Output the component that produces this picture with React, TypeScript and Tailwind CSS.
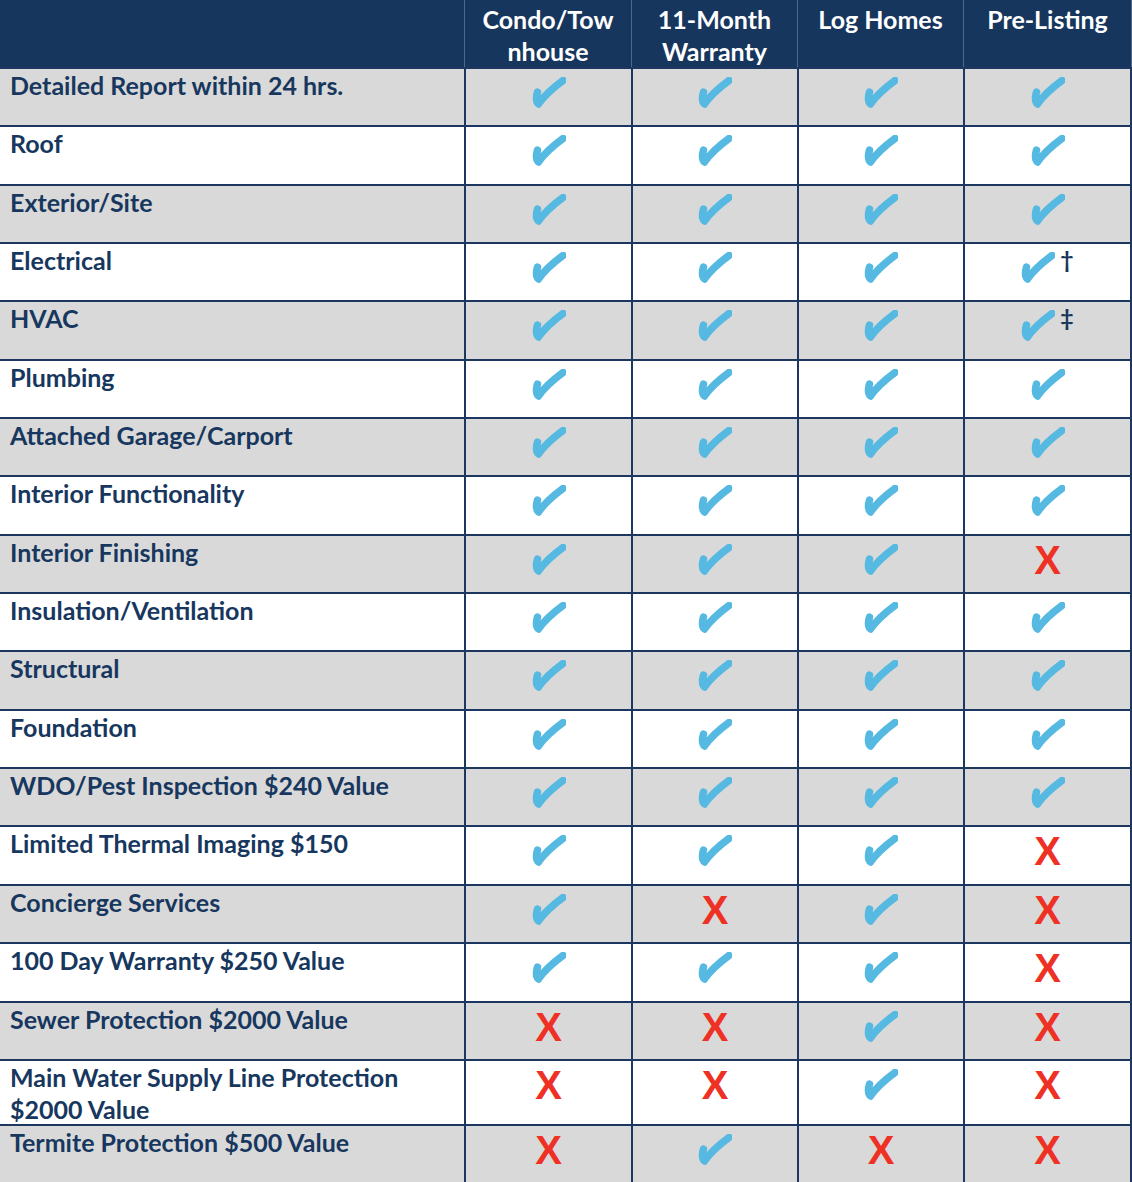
import React from "react";

type Mark = "c" | "x" | "c1" | "c2";

const rows: { label: React.ReactNode; marks: Mark[]; h?: string }[] = [
  { label: "Detailed Report within 24 hrs.", marks: ["c", "c", "c", "c"] },
  { label: "Roof", marks: ["c", "c", "c", "c"] },
  { label: "Exterior/Site", marks: ["c", "c", "c", "c"] },
  { label: "Electrical", marks: ["c", "c", "c", "c1"] },
  { label: "HVAC", marks: ["c", "c", "c", "c2"] },
  { label: "Plumbing", marks: ["c", "c", "c", "c"] },
  { label: "Attached Garage/Carport", marks: ["c", "c", "c", "c"] },
  { label: "Interior Functionality", marks: ["c", "c", "c", "c"] },
  { label: "Interior Finishing", marks: ["c", "c", "c", "x"] },
  { label: "Insulation/Ventilation", marks: ["c", "c", "c", "c"] },
  { label: "Structural", marks: ["c", "c", "c", "c"] },
  { label: "Foundation", marks: ["c", "c", "c", "c"] },
  { label: "WDO/Pest Inspection $240 Value", marks: ["c", "c", "c", "c"] },
  { label: "Limited Thermal Imaging $150", marks: ["c", "c", "c", "x"] },
  { label: "Concierge Services", marks: ["c", "x", "c", "x"] },
  { label: "100 Day Warranty $250 Value", marks: ["c", "c", "c", "x"] },
  { label: "Sewer Protection $2000 Value", marks: ["x", "x", "c", "x"] },
  {
    label: (
      <>
        Main Water Supply Line Protection
        <br />
        $2000 Value
      </>
    ),
    marks: ["x", "x", "c", "x"],
    h: "tall",
  },
  { label: "Termite Protection $500 Value", marks: ["x", "c", "x", "x"] },
];

function Check() {
  return (
    <svg width="34" height="31" viewBox="0 0 34 31" className="block">
      <path
        d="M5.5 15 Q3 24 6.5 27 Q14 16 31 3.5"
        fill="none"
        stroke="#55b9e1"
        strokeWidth="7.5"
        strokeLinecap="round"
        strokeLinejoin="round"
      />
    </svg>
  );
}

function Cross() {
  return (
    <span className="block text-[40px] leading-[32px] font-bold text-[#ee3124] font-['Liberation_Sans',Arial,sans-serif]">
      X
    </span>
  );
}

function MarkCell({ m }: { m: Mark }) {
  if (m === "x") return <Cross />;
  if (m === "c1" || m === "c2")
    return (
      <div className="flex items-start gap-[5px]">
        <Check />
        <span className="text-[23px] leading-[22px] font-bold text-[#17375e] -mt-[4px]">
          {m === "c1" ? "†" : "‡"}
        </span>
      </div>
    );
  return <Check />;
}

const cols = "grid grid-cols-[464px_167px_166px_166px_169px]";

export default function App() {
  return (
    <div className="w-[1132px] h-[1182px] bg-white font-['Lato','Open_Sans',sans-serif] font-bold overflow-hidden">
      <div className={`${cols} h-[67px] bg-[#17365d] text-white text-[25px] leading-[32px]`}>
        <div />
        <div className="border-l border-[#51688b] text-center pt-[3px]">
          Condo/Tow
          <br />
          nhouse
        </div>
        <div className="border-l border-[#51688b] text-center pt-[3px]">
          11-Month
          <br />
          Warranty
        </div>
        <div className="border-l border-[#51688b] text-center pt-[3px]">Log Homes</div>
        <div className="border-l border-r border-[#51688b] text-center pt-[3px]">Pre-Listing</div>
      </div>
      {rows.map((r, i) => (
        <div
          key={i}
          className={`${cols} ${r.h === "tall" ? "h-[65px]" : i === rows.length - 1 ? "h-[58px]" : "h-[58.35px]"} ${
            i % 2 === 0 ? "bg-[#d9d9d9]" : "bg-white"
          } border-t-2 border-[#1d3760]`}
        >
          <div className="pl-[10px] text-[25px] leading-[32px] text-[#17375e] pt-0">{r.label}</div>
          {r.marks.map((m, j) => (
            <div
              key={j}
              className={`border-l-2 border-[#1d3760] flex justify-center items-start pt-[8px] ${
                j === 3 ? "border-r-2" : ""
              }`}
            >
              <MarkCell m={m} />
            </div>
          ))}
        </div>
      ))}
    </div>
  );
}
